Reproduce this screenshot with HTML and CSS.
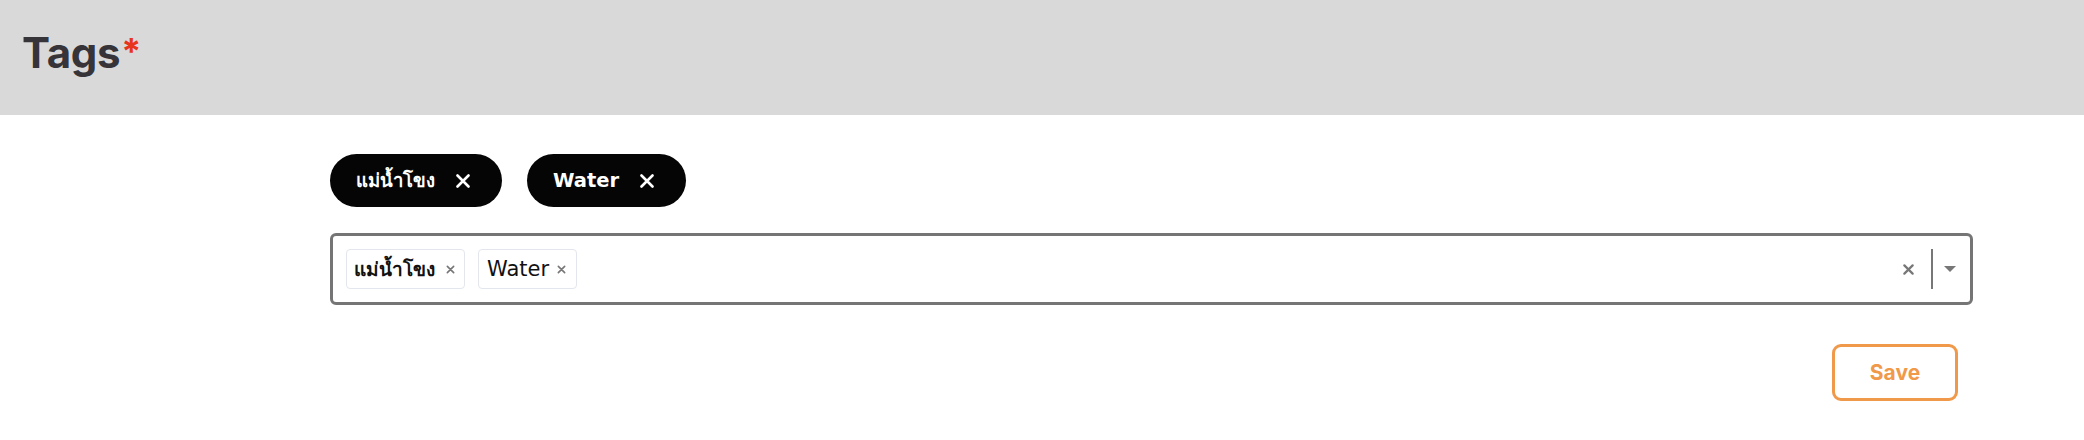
FILE: index.html
```html
<!DOCTYPE html>
<html lang="en">
<head>
<meta charset="utf-8">
<title>Tags</title>
<link rel="stylesheet" href="styles.css">
</head>
<body>
<header class="header">
  <h1 class="title">Tags<span class="req">*</span></h1>
</header>
<main class="content">
  <div class="pills">
    <span class="pill"><span class="pill-text th" lang="th">แม่น้ำโขง</span><svg class="pill-x" viewBox="0 0 14 14" width="14" height="14"><path d="M1.5 1.5 L12.5 12.5 M12.5 1.5 L1.5 12.5" stroke="#fff" stroke-width="2.6" stroke-linecap="round"/></svg></span>
    <span class="pill"><span class="pill-text">Water</span><svg class="pill-x" viewBox="0 0 14 14" width="14" height="14"><path d="M1.5 1.5 L12.5 12.5 M12.5 1.5 L1.5 12.5" stroke="#fff" stroke-width="2.6" stroke-linecap="round"/></svg></span>
  </div>
  <div class="select">
    <div class="values">
      <span class="chip"><span class="chip-text th" lang="th">แม่น้ำโขง</span><svg class="chip-x" viewBox="0 0 10 10" width="9" height="9"><path d="M1.5 1.5 L8.5 8.5 M8.5 1.5 L1.5 8.5" stroke="#777" stroke-width="1.8" stroke-linecap="round"/></svg></span>
      <span class="chip chip-en"><span class="chip-text">Water</span><svg class="chip-x" viewBox="0 0 10 10" width="9" height="9"><path d="M1.5 1.5 L8.5 8.5 M8.5 1.5 L1.5 8.5" stroke="#777" stroke-width="1.8" stroke-linecap="round"/></svg></span>
    </div>
    <div class="indicators">
      <svg class="clear" viewBox="0 0 12 12" width="11" height="11"><path d="M1.5 1.5 L10.5 10.5 M10.5 1.5 L1.5 10.5" stroke="#777" stroke-width="2.4" stroke-linecap="round"/></svg>
      <span class="sep"></span>
      <svg class="arrow" viewBox="0 0 12 6" width="12" height="6"><path d="M0 0 L12 0 L6 6 Z" fill="#777"/></svg>
    </div>
  </div>
  <div class="actions">
    <button class="save" type="button">Save</button>
  </div>
</main>
</body>
</html>
```

FILE: styles.css
```css
html, body {
  margin: 0;
  padding: 0;
  background: #ffffff;
  font-family: "Inter", "Noto Sans", sans-serif;
}

.header {
  height: 115px;
  background: #d9d9d9;
  box-sizing: border-box;
  padding: 26px 0 0 22px;
}

.title {
  margin: 0;
  font-family: "Inter", "Noto Sans", sans-serif;
  font-size: 42px;
  line-height: 50px;
  font-weight: 700;
  letter-spacing: -0.3px;
  color: #363439;
}

.req {
  color: #e8341c;
  font-size: 36px;
  vertical-align: 4px;
  margin-left: 1px;
}

.content {
  padding: 39px 111px 0 330px;
}

.pills {
  display: flex;
  gap: 25px;
}

.pill {
  display: inline-flex;
  align-items: center;
  height: 53px;
  padding: 0 32px 0 26px;
  background: #050505;
  color: #ffffff;
  border-radius: 27px;
  font-family: "DejaVu Sans", sans-serif;
  font-size: 19.5px;
  font-weight: 700;
  gap: 21px;
}

.pill .th {
  font-size: 18.5px;
}

.pill-x {
  display: block;
}

.select {
  margin-top: 26px;
  height: 72px;
  box-sizing: border-box;
  border: 3px solid #757575;
  border-radius: 6px;
  display: flex;
  align-items: center;
  padding: 0 0 0 13px;
}

.values {
  flex: 1;
  display: flex;
  gap: 13px;
}

.chip {
  display: inline-flex;
  align-items: center;
  height: 40px;
  box-sizing: border-box;
  border: 1px solid #e3e6ec;
  border-radius: 4px;
  padding: 0 9px 0 7px;
  font-family: "DejaVu Sans", sans-serif;
  font-size: 21px;
  color: #111111;
  gap: 11px;
}

.chip-en {
  gap: 8px;
  padding: 0 10px 0 8px;
}

.chip .th {
  font-size: 19px;
  font-weight: 700;
}

.chip-x {
  display: block;
}

.indicators {
  display: flex;
  align-items: center;
  padding-right: 14px;
}

.clear {
  display: block;
  margin-right: 17px;
}

.sep {
  display: block;
  width: 2px;
  height: 40px;
  background: #777777;
  margin-right: 11px;
}

.arrow {
  display: block;
}

.actions {
  display: flex;
  justify-content: flex-end;
  margin-top: 39px;
  padding-right: 15px;
}

.save {
  width: 126px;
  height: 57px;
  box-sizing: border-box;
  border: 3px solid #f0994a;
  border-radius: 9px;
  background: #ffffff;
  color: #f0994a;
  font-family: "Inter", "Noto Sans", sans-serif;
  font-size: 21px;
  font-weight: 700;
  padding: 0;
}
```
